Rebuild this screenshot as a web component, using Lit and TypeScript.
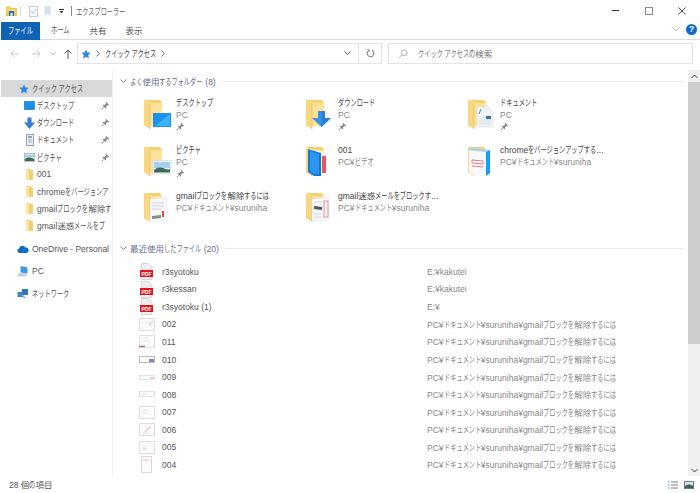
import { LitElement, css, html, svg } from 'lit';
import { customElement } from 'lit/decorators.js';

// Kana in the reference font are much narrower than in Noto CJK, so those runs get squeezed.
const KANA_SIZE = 9;
const KANA_SCALE = 0.69;
const SPACE_EM = 0.224;
const kanaShrink = (run: string) => {
  const spaces = run.split(' ').length - 1;
  const ems = run.length - spaces + spaces * SPACE_EM;
  return (-ems * KANA_SIZE * (1 - KANA_SCALE)).toFixed(2);
};
const t = (text: string) =>
  text.split(/([\u3040-\u30ff]+(?: [\u3040-\u30ff]+)*)/).filter(Boolean).map(run =>
    /^[\u3040-\u30ff]/.test(run)
      ? html`<span class="kana" style="margin-right:${kanaShrink(run)}px">${run}</span>`
      : run
  );

const pin = svg`<svg class="pin" width="9" height="9" viewBox="0 0 10 10"><path d="M5.6 .8 9.2 4.4 8.4 4.900 7.300 4.400 5.600 6.100 5.700 7.600 5 8.200 1.800 5 2.400 4.300 3.900 4.400 5.600 2.700 5.100 1.600Z" fill="#858a8f"/><path d="M3 7 .8 9.2" stroke="#858a8f" fill="none"/></svg>`;

const smallFolder = svg`<svg width="11" height="13" viewBox="0 0 11 13"><path d="M2 1h3l4 1.500V12H2Z" fill="#f6d26e"/><path d="M2 1l3.500 1.500V12H2Z" fill="#fbe49c"/><path d="M6 2.500V12" stroke="#e2b85a" stroke-width=".6"/></svg>`;

const bigFolder = (overlay: unknown) => svg`<svg class="bigfolder" width="34" height="34" viewBox="0 0 34 34">
  <path d="M2 2h16l2 3v23H2Z" fill="#f5d06c"/>
  <path d="M2 2l8 3h10v23H8v3L2 27Z" fill="#fbe39a"/>
  <path d="M2 2l6 3v26L2 27Z" fill="#f7d77f"/>
  <path d="M8 5v26" stroke="#e5bd62" stroke-width=".7"/>
  ${overlay}
</svg>`;

const ovDesktop = svg`<rect x="11" y="15" width="18" height="14" fill="#1b93ee"/><path d="M13 28 28 16v12Z" fill="#3fb1f7"/>`;
const ovDownload = svg`<path d="M14 13h7v7h6l-9.500 9L8 20h6Z" fill="#3a94e6"/><path d="M17.500 13H21v7h6l-9.500 9Z" fill="#2a80d4"/>`;
const ovDoc = svg`<path d="M11 9h11l5 5v15H11Z" fill="#f1f4f7" stroke="#d8dde2" stroke-width=".6"/><path d="M15 11l-2 5" stroke="#4a8fd0"/><rect x="20" y="18" width="5" height="3" fill="#3d6f9e"/><path d="M13 22h12M13 24h12M13 26h12" stroke="#c9d0d6" stroke-width=".6"/>`;
const ovPic = svg`<rect x="11" y="15.500" width="18" height="13.500" fill="#f4f6f8" stroke="#cfd4d9" stroke-width=".6"/><rect x="12" y="17" width="16" height="6" fill="#a6cff0"/><path d="M12 25c3-3 6-3 9-2s5 2 7 1v3.500H12Z" fill="#3f6b5a"/>`;
const ov001 = svg`<path d="M4 4 24 8V31H10L4 27Z" fill="#f6f7f8"/><path d="M4 4 17 8V31H10L4 27Z" fill="#1279d9"/><path d="M6 6l9 3v20l-5 0-4-3Z" fill="#2b97ee"/><rect x="18" y="11" width="4" height="17" fill="#e9555d"/>`;
const ovChrome = svg`<path d="M3 5 20 7V31H8L3 27Z" fill="#f7f8f9"/><path d="M3 3 24 5 20 7 3 5Z" fill="#9fd3f7"/><path d="M20 7l4-2v23l-4 3Z" fill="#12a0f5"/><path d="M6 15l11 1v3L6 18ZM6 21l11 1" fill="none" stroke="#e97a7f"/>`;
const ovGmail1 = svg`<path d="M8 8 25 6V29L8 31Z" fill="#f5f6f7" stroke="#e2e4e6" stroke-width=".5"/><path d="M10 25l9-1v3l-9 1Z" fill="#8b8b8b"/><path d="M10 12h12M10 15h12M10 18h9" stroke="#d5d8db"/><rect x="20" y="20" width="2" height="6" fill="#d94a4a"/>`;
const ovGmail2 = svg`<path d="M8 8 25 6V29L8 31Z" fill="#f5f6f7" stroke="#e2e4e6" stroke-width=".5"/><path d="M10 15l8 1v3l-8-1Z" fill="#555"/><path d="M10 11h8M10 23h8M10 26h8" stroke="#d5d8db"/><rect x="20" y="10" width="4" height="16" fill="none" stroke="#ee8f8f"/>`;

const pdfIcon = svg`<svg width="16" height="17" viewBox="0 0 16 17"><path d="M2.500 .5h7l3.500 3.500v12.500H2.500Z" fill="#eeeeee" stroke="#cccccc" stroke-width=".7"/><rect x="1" y="7" width="13" height="7" fill="#e2141f"/><text x="7.500" y="12.500" text-anchor="middle" font-size="5" font-weight="700" fill="#fff" font-family="Liberation Sans">PDF</text></svg>`;

const thumb = (inner: unknown) => svg`<svg width="16" height="13" viewBox="0 0 16 13"><rect x=".5" y=".5" width="15" height="12" fill="#fbfbfb" stroke="#dedede"/>${inner}</svg>`;

interface RecentFile { name: string; path: string; icon: unknown; }

const gmailPath = 'PC¥ドキュメント¥suruniha¥gmailブロックを解除するには';
const recent: RecentFile[] = [
  { name: 'r3syotoku', path: 'E:¥kakutei', icon: pdfIcon },
  { name: 'r3kessan', path: 'E:¥kakutei', icon: pdfIcon },
  { name: 'r3syotoku (1)', path: 'E:¥', icon: pdfIcon },
  { name: '002', path: gmailPath, icon: thumb(svg`<path d="M10 7l4-4" stroke="#eeb4b4"/><path d="M2 4h7" stroke="#e8e8e8"/>`) },
  { name: '011', path: gmailPath, icon: thumb(svg`<path d="M0 11.500h6" stroke="#a87070" stroke-width="1.400"/><path d="M3 3h6M3 6h8" stroke="#e8e8e8"/>`) },
  { name: '010', path: gmailPath, icon: svg`<svg width="16" height="9" viewBox="0 0 16 9"><rect x=".5" y="1.500" width="15" height="6" fill="#fbfbfb" stroke="#bbb"/><rect x="10" y="4" width="5" height="3" fill="#8a8ab8"/></svg>` },
  { name: '009', path: gmailPath, icon: svg`<svg width="16" height="7" viewBox="0 0 16 7"><rect x=".5" y="1.500" width="15" height="4" fill="#fbfbfb" stroke="#e2e2e2"/><path d="M11 4h4" stroke="#e9a7a7"/></svg>` },
  { name: '008', path: gmailPath, icon: svg`<svg width="16" height="7" viewBox="0 0 16 7"><rect x=".5" y=".5" width="15" height="5" fill="#fbfbfb" stroke="#e2e2e2"/><path d="M2 3h6" stroke="#e4e4e4"/></svg>` },
  { name: '007', path: gmailPath, icon: thumb(svg`<path d="M3 4h6M3 7h6" stroke="#e6e6e6"/>`) },
  { name: '006', path: gmailPath, icon: thumb(svg`<path d="M6 9l5-5" stroke="#eda0a0"/><path d="M3 10h7" stroke="#e2e2e2"/>`) },
  { name: '005', path: gmailPath, icon: thumb(svg`<path d="M5 5v5M3 8h5" stroke="#e2e2e2"/>`) },
  { name: '004', path: gmailPath, icon: svg`<svg width="16" height="17" viewBox="0 0 16 17"><rect x="2.500" y=".5" width="10" height="16" fill="#fbfbfb" stroke="#dadada"/><path d="M4 4h6" stroke="#f0bcbc"/></svg>` },
];

const folders = [
  { name: 'デスクトップ', sub: 'PC', ov: ovDesktop, pinned: true },
  { name: 'ダウンロード', sub: 'PC', ov: ovDownload, pinned: true },
  { name: 'ドキュメント', sub: 'PC', ov: ovDoc, pinned: true },
  { name: 'ピクチャ', sub: 'PC', ov: ovPic, pinned: true },
  { name: '001', sub: 'PC¥ビデオ', ov: ov001, pinned: false },
  { name: 'chromeをバージョンアップする...', sub: 'PC¥ドキュメント¥suruniha', ov: ovChrome, pinned: false },
  { name: 'gmailブロックを解除するには', sub: 'PC¥ドキュメント¥suruniha', ov: ovGmail1, pinned: false },
  { name: 'gmail迷惑メールをブロックす...', sub: 'PC¥ドキュメント¥suruniha', ov: ovGmail2, pinned: false },
];

const star = svg`<svg width="10" height="10" viewBox="0 0 13 13"><path d="M6.500 .5 8.300 4.600 12.600 5 9.400 7.900 10.300 12.300 6.500 10 2.700 12.300 3.600 7.900 .4 5 4.700 4.600Z" fill="#2b88d8"/></svg>`;

const navItems = [
  { label: 'デスクトップ', pin: true, icon: svg`<svg width="11" height="9" viewBox="0 0 11 9"><rect x=".5" y=".5" width="10" height="8" fill="#1b8fe6" stroke="#0f6bb8" stroke-width=".6"/></svg>` },
  { label: 'ダウンロード', pin: true, icon: svg`<svg width="11" height="12" viewBox="0 0 11 12"><path d="M3.500 .5h4v5H11L5.500 12 0 5.500h3.500Z" fill="#2f7fd8"/></svg>` },
  { label: 'ドキュメント', pin: true, icon: svg`<svg width="10" height="12" viewBox="0 0 10 12"><rect x="1.500" y=".5" width="7" height="11" fill="#e8edf2" stroke="#98a2ac"/><rect x="3" y="2" width="4" height="2" fill="#8aa6c0"/><path d="M3 6h4M3 8h4" stroke="#a8b2bb"/></svg>` },
  { label: 'ピクチャ', pin: true, icon: svg`<svg width="11" height="9" viewBox="0 0 11 9"><rect x=".3" y=".5" width="10.400" height="8" fill="#f3f5f7" stroke="#8d98a3" stroke-width=".6"/><rect x="1" y="1.500" width="9" height="3" fill="#a9cdea"/><path d="M1 6c2-2 5-2 9 0v2H1Z" fill="#3d6a58"/></svg>` },
  { label: '001', pin: false, icon: smallFolder },
  { label: 'chromeをバージョンア', pin: false, icon: smallFolder },
  { label: 'gmailブロックを解除す', pin: false, icon: smallFolder },
  { label: 'gmail迷惑メールをブ', pin: false, icon: smallFolder },
];

@customElement('app-root')
export class AppRoot extends LitElement {
  render() {
    return html`
      <div class="window">
        <div class="titlebar">
          <svg class="tb-folder" width="11" height="10" viewBox="0 0 11 10"><path d="M0 .5h4l1 1.500h6v8H0Z" fill="#f3c44f"/><rect x="0" y="3" width="11" height="2" fill="#f9d679"/><rect x="3" y="5" width="5" height="5" fill="#1a73c9"/><rect x="4.500" y="7" width="2" height="3" fill="#fff"/></svg>
          <span class="sep first"></span>
          <svg class="tb-doc" width="9" height="11" viewBox="0 0 9 11"><rect x=".5" y=".5" width="8" height="10" fill="#f6f8fb" stroke="#c3cedb"/><path d="M2 5l2 2.500 3-5" stroke="#b9c8d8" fill="none"/></svg>
          <svg class="tb-mark" width="7" height="10" viewBox="0 0 7 10"><path d="M.5 0h6v10L3.500 7.500.5 10Z" fill="#d6e0eb"/></svg>
          <svg class="tb-drop" width="5" height="5" viewBox="0 0 5 5"><path d="M0 .5h5" stroke="#333"/><path d="M.5 2h4L2.500 4.500Z" fill="#333"/></svg>
          <span class="sep dark"></span>
          <span class="title">${t('エクスプローラー')}</span>
          <div class="controls">
            <svg width="8" height="8" viewBox="0 0 8 8"><path d="M0 3.500h7" stroke="#333"/></svg>
            <svg width="8" height="8" viewBox="0 0 8 8"><rect x=".5" y=".5" width="7" height="7" fill="none" stroke="#888"/></svg>
            <svg width="8" height="8" viewBox="0 0 8 8"><path d="M.5 .5l7 7M7.500 .5l-7 7" stroke="#555"/></svg>
          </div>
        </div>
        <div class="ribbon">
          <span class="tab file">${t('ファイル')}</span>
          <span class="tab home">${t('ホーム')}</span>
          <span class="tab">${t('共有')}</span>
          <span class="tab">${t('表示')}</span>
          <div class="ribbon-right">
            <svg width="8" height="5" viewBox="0 0 8 5"><path d="M.5 .5 4 4 7.500 .5" fill="none" stroke="#bbb"/></svg>
            <span class="help">?</span>
          </div>
        </div>
        <div class="addressrow">
          <div class="nav-buttons">
            <svg class="back" width="9" height="8" viewBox="0 0 9 8"><path d="M9 4H1M4 1 1 4l3 3" fill="none" stroke="#cacaca"/></svg>
            <svg class="forward" width="9" height="8" viewBox="0 0 9 8"><path d="M0 4h8M5 1l3 3-3 3" fill="none" stroke="#cacaca"/></svg>
            <svg class="hist" width="6" height="4" viewBox="0 0 6 4"><path d="M.5 .5 3 3 5.500 .5" fill="none" stroke="#cacaca"/></svg>
            <svg class="up" width="8" height="10" viewBox="0 0 8 10"><path d="M4 10V1M.5 4.500 4 1l3.500 3.500" fill="none" stroke="#555"/></svg>
          </div>
          <div class="address">
            ${star}
            <svg class="crumb" width="4" height="7" viewBox="0 0 4 7"><path d="M.5 .5l3 3-3 3" fill="none" stroke="#777"/></svg>
            <span class="crumb-text">${t('クイック アクセス')}</span>
            <svg class="crumb" width="4" height="7" viewBox="0 0 4 7"><path d="M.5 .5l3 3-3 3" fill="none" stroke="#777"/></svg>
            <svg class="addr-drop" width="7" height="5" viewBox="0 0 7 5"><path d="M.5 .5l3 3 3-3" fill="none" stroke="#666"/></svg>
            <span class="refresh">
              <svg width="9" height="9" viewBox="0 0 12 12"><path d="M3.500 2.200A4.500 4.500 0 1 0 8 1.900" fill="none" stroke="#666" stroke-width="1.300"/><path d="M1.800 .8 4.500 1.500 3.600 4" fill="none" stroke="#666" stroke-width="1.200"/></svg>
            </span>
          </div>
          <div class="search">
            <svg width="10" height="10" viewBox="0 0 12 12"><circle cx="7.500" cy="4.500" r="3.500" fill="none" stroke="#aaa"/><path d="M5 7 1 11" stroke="#aaa"/></svg>
            <span>${t('クイック アクセスの')}検索</span>
          </div>
        </div>
        <div class="main">
          <nav class="sidebar">
            <div class="nav-row active"><span class="quick">${star}</span><span class="nav-label">${t('クイック アクセス')}</span></div>
            ${navItems.map(i => html`
              <div class="nav-row sub">
                <span class="nav-ic">${i.icon}</span>
                <span class="nav-label">${t(i.label)}</span>
                ${i.pin ? html`<span class="nav-pin">${pin}</span>` : ''}
              </div>`)}
            <div class="nav-row root first">
              <span class="nav-ic"><svg width="12" height="8" viewBox="0 0 12 8"><path d="M2.500 8a2.300 2.300 0 0 1-.4-4.500A3.500 3.500 0 0 1 8.500 2.500 2.800 2.800 0 0 1 9.500 8Z" fill="#0f6cc4"/></svg></span>
              <span class="nav-label">OneDrive - Personal</span>
            </div>
            <div class="nav-row root">
              <span class="nav-ic"><svg width="12" height="11" viewBox="0 0 12 11"><path d="M3.500 0l7 1.500v6l-7-1Z" fill="#3b9be0"/><path d="M0 9l3.500-2.500 7 1L9 10.500H1Z" fill="#c4ccd4"/></svg></span>
              <span class="nav-label">PC</span>
            </div>
            <div class="nav-row root">
              <span class="nav-ic"><svg width="12" height="11" viewBox="0 0 12 11"><rect x=".5" y="4" width="6" height="5" fill="#3a86c8"/><rect x="5" y="1" width="6" height="6" fill="#2f78b8"/><path d="M5 7l3 3" stroke="#7fb2dc" stroke-width="1.600"/></svg></span>
              <span class="nav-label">${t('ネットワーク')}</span>
            </div>
          </nav>
          <section class="content">
            <div class="group-head">
              <svg width="7" height="5" viewBox="0 0 7 5"><path d="M.5 .5l3 3 3-3" fill="none" stroke="#8a8a8a"/></svg>
              <span>${t('よく使用するフォルダー (8)')}</span><i></i>
            </div>
            <div class="folder-grid">
              ${folders.map(f => html`
                <div class="folder">
                  ${bigFolder(f.ov)}
                  <div class="folder-text">
                    <div class="fname">${t(f.name)}</div>
                    <div class="fsub">${t(f.sub)}</div>
                    ${f.pinned ? html`<div class="fpin">${pin}</div>` : ''}
                  </div>
                </div>`)}
            </div>
            <div class="group-head recent">
              <svg width="7" height="5" viewBox="0 0 7 5"><path d="M.5 .5l3 3 3-3" fill="none" stroke="#8a8a8a"/></svg>
              <span>${t('最近使用したファイル (20)')}</span><i></i>
            </div>
            <div class="files">
              ${recent.map(r => html`
                <div class="file">
                  <span class="file-ic">${r.icon}</span>
                  <span class="file-name">${r.name}</span>
                  <span class="file-path">${t(r.path)}</span>
                </div>`)}
            </div>
          </section>
          <div class="scrollbar">
            <span class="sb-btn"><svg width="7" height="5" viewBox="0 0 7 5"><path d="M.5 4 3.500 1l3 3" fill="none" stroke="#444"/></svg></span>
            <span class="sb-thumb"></span>
            <span class="sb-rest"></span>
            <span class="sb-btn"><svg width="7" height="5" viewBox="0 0 7 5"><path d="M.5 1l3 3 3-3" fill="none" stroke="#444"/></svg></span>
          </div>
        </div>
        <footer class="status">
          <span>${t('28 個の項目')}</span>
          <div class="views">
            <svg width="10" height="10" viewBox="0 0 10 10"><path d="M3 2h7M3 5h7M3 8h7" stroke="#777"/><path d="M0 2h1.500M0 5h1.500M0 8h1.500" stroke="#3c76b0"/></svg>
            <svg width="10" height="8" viewBox="0 0 10 8"><rect x=".5" y=".5" width="9" height="7" fill="#d5e3ef" stroke="#6c7a88"/><path d="M1 5c3-2 5-2 8 0v2H1Z" fill="#3e5e52"/></svg>
          </div>
        </footer>
      </div>
    `;
  }

  static override styles = css`
    :host {
      display: block;
      width: 700px;
      height: 493px;
      background: #fff;
      overflow: hidden;
      font-family: 'Liberation Sans', 'Noto Sans CJK JP', sans-serif;
      font-size: 8.5px;
      color: #444;
    }
    svg { display: block; flex: none; }
    .kana {
      display: inline-block;
      font-size: 9px;
      white-space: pre;
      transform: scaleX(0.69);
      transform-origin: left center;
    }
    .window { display: flex; flex-direction: column; height: 493px; }

    .titlebar { display: flex; align-items: center; height: 22px; padding-left: 6px; flex: none; }
    .tb-folder { margin-right: 3px; }
    .sep { width: 1px; height: 10px; background: #dcdcdc; }
    .sep.first { margin-right: 8px; }
    .sep.dark { background: #888; margin: 0 4px 0 7px; }
    .tb-doc { margin-right: 6px; }
    .tb-mark { margin-right: 8px; }
    .title { color: #666; }
    .controls { margin-left: auto; display: flex; gap: 25px; padding-right: 14px; }

    .ribbon { display: flex; height: 17px; box-sizing: content-box; border-bottom: 1px solid #dadbdc; flex: none; }
    .tab { width: 36px; height: 15px; display: flex; align-items: center; justify-content: center; color: #555; }
    .tab.home { width: 40px; }
    .tab.file { width: 39px; margin-left: 1px; background: #0e63b4; color: #fff; }
    .ribbon-right { margin-left: auto; display: flex; align-items: center; gap: 6px; padding-right: 3px; height: 15px; }
    .help { width: 11px; height: 11px; border-radius: 50%; background: #0f6cc8; color: #fff; font: 700 9px 'Liberation Sans', sans-serif; text-align: center; line-height: 11px; }

    .addressrow { display: flex; height: 30px; padding-top: 3px; box-sizing: border-box; flex: none; }
    .nav-buttons { width: 77px; height: 21px; display: flex; align-items: center; padding-left: 10px; box-sizing: border-box; }
    .forward { margin-left: 13px; }
    .hist { margin-left: 9px; }
    .up { margin-left: 8px; }
    .address { width: 305px; margin-right: 6px; height: 21px; box-sizing: border-box; border: 1px solid #e3e3e3; display: flex; align-items: center; padding-left: 3px; }
    .crumb { margin: 0 5px; }
    .crumb-text { color: #444; }
    .addr-drop { margin-left: auto; margin-right: 7px; }
    .refresh { width: 22px; height: 19px; border-left: 1px solid #e3e3e3; display: flex; align-items: center; justify-content: center; }
    .search { width: 305px; height: 21px; box-sizing: border-box; border: 1px solid #e3e3e3; display: flex; align-items: center; padding-left: 9px; gap: 10px; color: #777; }

    .main { flex: 1; display: flex; min-height: 0; }
    .sidebar { width: 112px; flex: none; border-right: 1px solid #f0f0f0; padding-top: 10px; }
    .nav-row { display: flex; align-items: center; height: 17.2px; white-space: nowrap; }
    .nav-row.active { background: #d9d9d9; height: 17px; margin-left: 1px; padding-left: 18px; }
    .quick { margin-right: 3px; }
    .nav-row.sub { padding-left: 24px; position: relative; }
    .nav-ic { width: 11px; flex: none; margin-right: 2px; display: flex; justify-content: center; }
    .nav-label { color: #555; }
    .nav-pin { position: absolute; left: 101px; top: 4px; }
    .nav-row.root { padding-left: 17px; height: 22.5px; }
    .nav-row.root .nav-ic { width: 12px; margin-right: 3px; }
    .nav-row.first { margin-top: 3px; }

    .content { flex: 1; min-width: 0; overflow: hidden; padding-top: 5px; }
    .group-head { display: flex; align-items: center; gap: 3px; height: 12px; padding: 0 5px 0 7px; color: #5f6f8f; white-space: nowrap; }
    .group-head i { flex: 1; height: 1px; background: #e8e8e8; margin-left: 3px; }
    .group-head.recent { margin-top: 4.5px; }
    .folder-grid { display: grid; grid-template-columns: repeat(3, 162px); grid-auto-rows: 46.5px; padding: 11px 0 0 29px; }
    .folder { display: flex; }
    .fname { color: #444; white-space: nowrap; height: 12px; line-height: 12px; margin-top: -1px; }
    .fsub { color: #888; white-space: nowrap; height: 12px; line-height: 12px; }
    .fpin { height: 10px; padding-top: 1px; }

    .files { padding: 9px 0 0 26px; }
    .file { display: flex; align-items: center; height: 17.55px; white-space: nowrap; }
    .file-ic { width: 16px; flex: none; margin-right: 7px; display: flex; justify-content: center; }
    .file-name { width: 265px; flex: none; color: #555; }
    .file-path { color: #888; }

    .scrollbar { width: 12px; flex: none; display: flex; flex-direction: column; background: #f0f0f0; }
    .sb-btn { height: 12px; flex: none; display: flex; align-items: center; justify-content: center; }
    .sb-thumb { height: 262px; background: #cdcdcd; flex: none; }
    .sb-rest { flex: 1; }

    .status { display: flex; align-items: center; justify-content: space-between; height: 17px; padding: 0 6px 0 9px; flex: none; color: #555; }
    .views { display: flex; align-items: center; gap: 6px; }
  `;
}

declare global {
  interface HTMLElementTagNameMap {
    'app-root': AppRoot;
  }
}
